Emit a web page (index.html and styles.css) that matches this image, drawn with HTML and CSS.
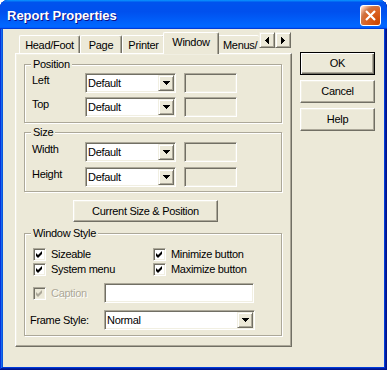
FILE: index.html
```html
<!DOCTYPE html>
<html lang="en">
<head>
<meta charset="UTF-8">
<title>Report Properties</title>
<link rel="stylesheet" href="styles.css">
</head>
<body>

<div class="window">
  <div class="titlebar">
    <span class="title">Report Properties</span>
    <button class="close" aria-label="Close">
      <svg width="19" height="19" viewBox="0 0 19 19"><path d="M5 5L14 14M14 5L5 14"/></svg>
    </button>
  </div>

  <div class="body">
    <!-- tab control -->
    <div class="tabctl">
      <div class="tabrow">
        <div class="tab t-head">Head/Foot</div>
        <div class="tab t-page">Page</div>
        <div class="tab t-printer">Printer</div>
        <div class="tab t-window active">Window</div>
        <div class="tab t-menus">Menus/</div>
        <div class="spin">
          <span class="spin-btn"><svg width="4" height="7" viewBox="0 0 4 7"><path d="M3 0h1v7h-1v-1h-1v-1h-1v-1h-1v-1h1v-1h1v-1h1z"/></svg></span>
          <span class="spin-btn"><svg width="4" height="7" viewBox="0 0 4 7"><path d="M0 0h1v1h1v1h1v1h1v1h-1v1h-1v1h-1v1h-1z"/></svg></span>
        </div>
      </div>

      <div class="panel">
        <fieldset class="group pos">
          <legend>Position</legend>
          <div class="grid">
            <span class="lbl">Left</span>
            <span class="combo"><span class="value">Default</span><span class="drop"><svg width="7" height="4" viewBox="0 0 7 4"><path d="M0 0h7v1h-1v1h-1v1h-1v1h-1v-1h-1v-1h-1v-1h-1z"/></svg></span></span>
            <span class="edit off"></span>
            <span class="lbl">Top</span>
            <span class="combo"><span class="value">Default</span><span class="drop"><svg width="7" height="4" viewBox="0 0 7 4"><path d="M0 0h7v1h-1v1h-1v1h-1v1h-1v-1h-1v-1h-1v-1h-1z"/></svg></span></span>
            <span class="edit off"></span>
          </div>
        </fieldset>

        <fieldset class="group size">
          <legend>Size</legend>
          <div class="grid">
            <span class="lbl">Width</span>
            <span class="combo"><span class="value">Default</span><span class="drop"><svg width="7" height="4" viewBox="0 0 7 4"><path d="M0 0h7v1h-1v1h-1v1h-1v1h-1v-1h-1v-1h-1v-1h-1z"/></svg></span></span>
            <span class="edit off"></span>
            <span class="lbl">Height</span>
            <span class="combo"><span class="value">Default</span><span class="drop"><svg width="7" height="4" viewBox="0 0 7 4"><path d="M0 0h7v1h-1v1h-1v1h-1v1h-1v-1h-1v-1h-1v-1h-1z"/></svg></span></span>
            <span class="edit off"></span>
          </div>
        </fieldset>

        <button class="btn current">Current Size &amp; Position</button>

        <fieldset class="group style">
          <legend>Window Style</legend>
          <div class="checks">
            <span class="check"><span class="box"><svg width="9" height="9" viewBox="0 0 9 9"><path d="M1 3L3 5L7 1V4L3 8L1 6Z"/></svg></span>Sizeable</span>
            <span class="check"><span class="box"><svg width="9" height="9" viewBox="0 0 9 9"><path d="M1 3L3 5L7 1V4L3 8L1 6Z"/></svg></span>Minimize button</span>
            <span class="check"><span class="box"><svg width="9" height="9" viewBox="0 0 9 9"><path d="M1 3L3 5L7 1V4L3 8L1 6Z"/></svg></span>System menu</span>
            <span class="check"><span class="box"><svg width="9" height="9" viewBox="0 0 9 9"><path d="M1 3L3 5L7 1V4L3 8L1 6Z"/></svg></span>Maximize button</span>
          </div>
          <div class="caption-row">
            <span class="check disabled"><span class="box"><svg width="9" height="9" viewBox="0 0 9 9"><path d="M1 3L3 5L7 1V4L3 8L1 6Z"/></svg></span>Caption</span>
            <span class="edit"></span>
          </div>
          <div class="frame-row">
            <span class="lbl">Frame Style:</span>
            <span class="combo"><span class="value">Normal</span><span class="drop"><svg width="7" height="4" viewBox="0 0 7 4"><path d="M0 0h7v1h-1v1h-1v1h-1v1h-1v-1h-1v-1h-1v-1h-1z"/></svg></span></span>
          </div>
        </fieldset>
      </div>
    </div>

    <!-- dialog buttons -->
    <div class="actions">
      <button class="btn default">OK</button>
      <button class="btn">Cancel</button>
      <button class="btn">Help</button>
    </div>
  </div>
</div>

</body>
</html>
```

FILE: styles.css
```css
/* —— RESET —— */
*{box-sizing:border-box;margin:0;padding:0}
html,body{background:#fff}
body{font:11px/13px "Liberation Sans",Arial,sans-serif;letter-spacing:-.3px;color:#000}
button{font:inherit;letter-spacing:inherit;color:inherit;background:none;border:0}

/* —— WINDOW FRAME —— */
.window{
  width:387px;height:370px;display:flex;flex-direction:column;
  padding:0 3px 3px;background:#0831d9;border-radius:8px 8px 0 0;
  box-shadow:inset -1px -1px #00138c,inset 1px 1px #0831d9,
    inset -2px -2px #001ea0,inset 2px 2px #166aee,
    inset -3px -3px #003bda,inset 3px 3px #0855dd;
}
.titlebar{
  height:29px;margin:0 -3px;padding:2px 6px 0 7px;
  display:flex;align-items:center;justify-content:space-between;
  border-radius:8px 8px 0 0;
  background:linear-gradient(180deg,#0997ff,#0053ee 8%,#0050ee 40%,#06f 88%,#06f 93%,#005bff 95%,#003dd7 96%,#003dd7);
}
.title{font:bold 13px/16px "Liberation Sans",Arial,sans-serif;letter-spacing:0;color:#fff;text-shadow:1px 1px #0f1089}
.close{
  width:21px;height:21px;display:flex;border:1px solid #fff;border-radius:3px;
  background:radial-gradient(circle at 90% 90%,#cc4600 0%,#dc6527 55%,#cd7546 70%,#ffccb2 90%,#fff 100%);
}
.close path{stroke:#fff;stroke-width:2.2;fill:none}

.body{flex:1;background:#ece9d8;display:flex;gap:8px;padding:3px 0 0 12px}

/* —— TABS —— */
.tabctl{width:277px}
.tabrow{height:21px;display:flex;align-items:flex-end;padding-left:4px}
.tab{
  height:18px;padding:3px 0 1px;text-align:center;background:#ece9d8;
  border:1px solid #fff;border-bottom:0;border-right-color:#716f64;
  border-radius:2px 2px 0 0;box-shadow:inset -1px 0 #aca899;
}
.t-head{width:61px}
.t-page{width:42px}
.t-printer{width:43px}
.t-window{width:56px}
.t-menus{width:42px;overflow:hidden;white-space:nowrap;text-align:left;padding-left:5px;border-right:0;box-shadow:none}
.tab.active{height:22px;margin:0 -2px -1px;padding:3px 0 5px;position:relative;z-index:1}
.spin{align-self:flex-start;display:flex}
.spin-btn{
  width:16px;height:16px;display:flex;align-items:center;justify-content:center;
  border:1px solid;border-color:#f1efe2 #716f64 #716f64 #f1efe2;
  box-shadow:inset 1px 1px #fff,inset -1px -1px #aca899;background:#ece9d8;
}
.spin-btn svg,.drop svg{shape-rendering:crispEdges}

.panel{
  height:294px;padding:4px 0 0 8px;
  border:1px solid;border-color:#fff #716f64 #716f64 #fff;
  box-shadow:inset -1px -1px #aca899,inset 1px 1px #f1efe2;
}

/* —— GROUP BOXES —— */
.group{
  width:258px;padding:0 6px;border:1px solid #aca899;
  box-shadow:1px 1px #fff,inset 1px 1px #fff;
}
.group legend{padding:0 2px;line-height:13px;background:#ece9d8}
.grid{display:grid;grid-template-columns:53px 99px 53px;margin-left:1px}
.grid .combo{width:91px}
.pos{padding-top:2px;padding-bottom:5px}
.pos .grid{row-gap:4px}
.size{margin-top:3px;padding-top:3px;padding-bottom:4px}
.size .grid{row-gap:5px}
.lbl{padding-top:1px}

/* —— FIELDS —— */
.combo,.edit{
  height:20px;display:flex;padding:1px;background:#fff;
  border:1px solid;border-color:#aca899 #fff #fff #aca899;
  box-shadow:inset 1px 1px #716f64,inset -1px -1px #f1efe2;
}
.edit.off{background:#ece9d8}
.value{flex:1;line-height:16px;padding-left:1px;white-space:nowrap}
.drop{
  width:16px;height:16px;display:flex;align-items:center;justify-content:center;
  border:1px solid;border-color:#f1efe2 #716f64 #716f64 #f1efe2;
  box-shadow:inset 1px 1px #fff,inset -1px -1px #aca899;background:#ece9d8;
}

/* —— BUTTONS —— */
.btn{
  width:75px;height:23px;background:#ece9d8;
  border:1px solid;border-color:#fff #716f64 #716f64 #fff;
  box-shadow:inset -1px -1px #aca899,inset 1px 1px #f1efe2;
}
.btn.default{border:1px solid #000;box-shadow:inset 1px 1px #fff,inset -1px -1px #716f64,inset -2px -2px #aca899}
.current{display:block;width:145px;height:22px;margin:8px 0 0 49px}
.actions{display:flex;flex-direction:column;gap:5px;padding-top:20px}

/* —— WINDOW STYLE —— */
.style{margin-top:5px;padding-top:7px;padding-bottom:5px}
.checks{display:grid;grid-template-columns:120px auto;grid-auto-rows:15px;margin-left:2px}
.check{display:flex;align-items:center;gap:5px;white-space:nowrap}
.box{
  width:13px;height:13px;display:flex;padding:1px;background:#fff;
  border:1px solid;border-color:#aca899 #fff #fff #aca899;
  box-shadow:inset 1px 1px #716f64,inset -1px -1px #f1efe2;
}
.box path{fill:#000}
.disabled{color:#aca899;text-shadow:1px 1px #fff}
.disabled .box{background:#ece9d8}
.disabled .box path{fill:#aca899}
.caption-row{display:grid;grid-template-columns:71px 150px;align-items:center;height:20px;margin:6px 0 0 2px}
.frame-row{display:grid;grid-template-columns:74px 151px;align-items:center;margin:7px 0 0 -1px}
.frame-row .lbl{padding-top:0}
```
